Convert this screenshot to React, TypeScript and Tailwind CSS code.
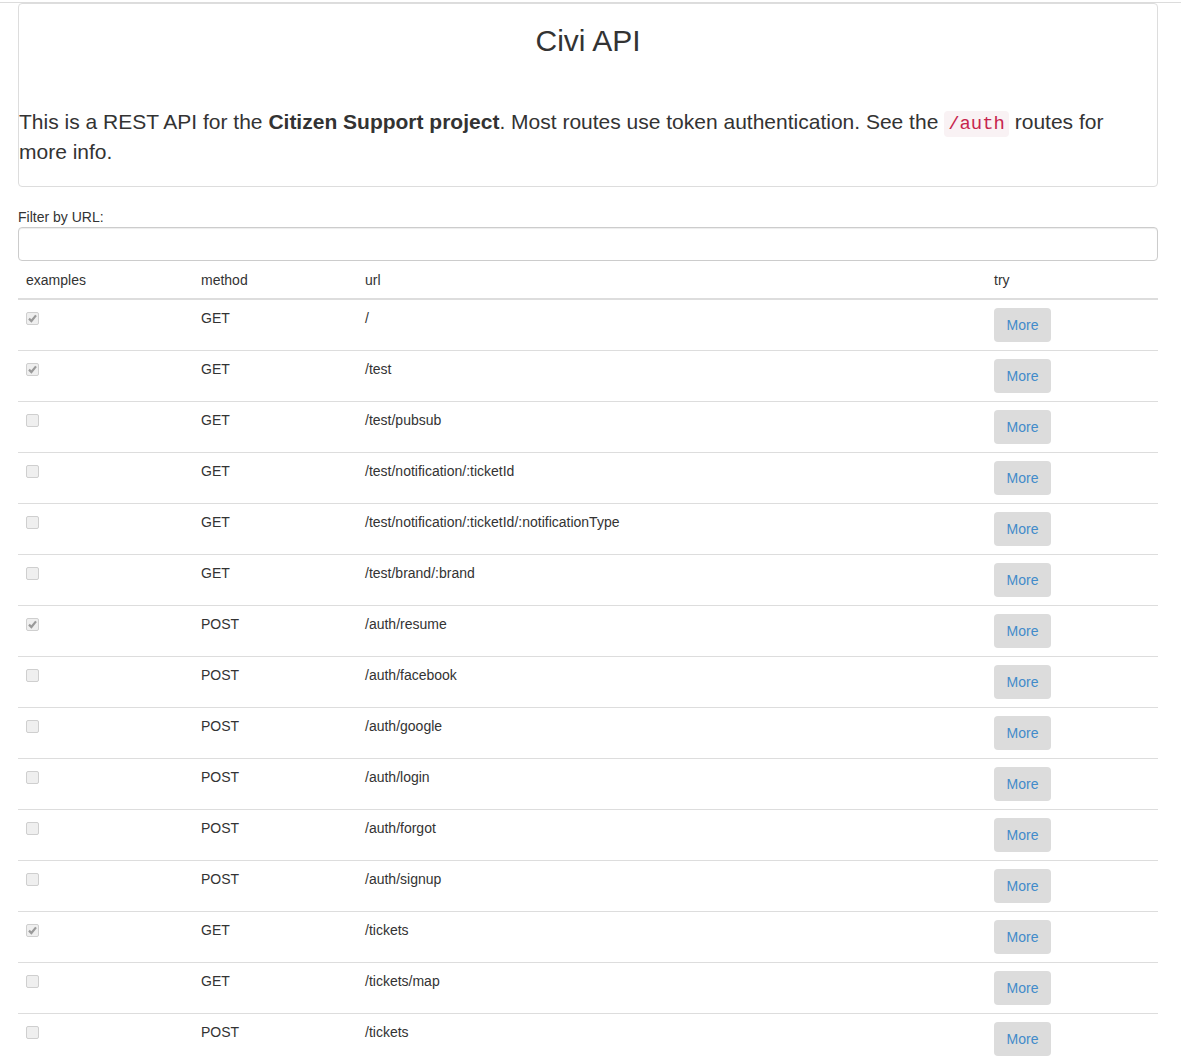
import React from 'react';

const routes = [
  { checked: true, method: 'GET', url: '/' },
  { checked: true, method: 'GET', url: '/test' },
  { checked: false, method: 'GET', url: '/test/pubsub' },
  { checked: false, method: 'GET', url: '/test/notification/:ticketId' },
  { checked: false, method: 'GET', url: '/test/notification/:ticketId/:notificationType' },
  { checked: false, method: 'GET', url: '/test/brand/:brand' },
  { checked: true, method: 'POST', url: '/auth/resume' },
  { checked: false, method: 'POST', url: '/auth/facebook' },
  { checked: false, method: 'POST', url: '/auth/google' },
  { checked: false, method: 'POST', url: '/auth/login' },
  { checked: false, method: 'POST', url: '/auth/forgot' },
  { checked: false, method: 'POST', url: '/auth/signup' },
  { checked: true, method: 'GET', url: '/tickets' },
  { checked: false, method: 'GET', url: '/tickets/map' },
  { checked: false, method: 'POST', url: '/tickets' },
];

// greyed-out checkbox, like a disabled native one
function Check({ checked }: { checked: boolean }) {
  return (
    <span className="mt-[4px] flex h-[13px] w-[13px] items-center justify-center rounded-[2px] border border-[#cfcfcf] bg-[#efefef]">
      {checked && (
        <svg width="9" height="9" viewBox="0 0 9 9">
          <path d="M1 4.6 L3.4 7 L8 1.4" fill="none" stroke="#9a9a9a" strokeWidth="2.2" />
        </svg>
      )}
    </span>
  );
}

export default function App() {
  return (
    <div className="min-h-screen bg-white pt-[2px] text-[14px] leading-[20px] text-[#333] font-['Liberation_Sans',Arial,sans-serif]">
      <div className="h-px w-full bg-[#dcdcdc]" />

      <div className="ml-[18px] w-[1140px]">
        {/* intro panel */}
        <div className="rounded-[4px] border border-[#ddd] pb-[19px]">
          <h2 className="mt-[20px] text-center text-[30px] leading-[33px] font-normal">Civi API</h2>
          <p className="mt-[50px] text-[21px] leading-[30px]">
            This is a REST API for the <b className="font-bold">Citizen Support project</b>. Most routes use token authentication. See the{' '}
            <code className="rounded-[4px] bg-[#f9f2f4] px-[4px] py-[2px] text-[18.9px] leading-none text-[#c7254e] font-['Liberation_Mono',monospace]">/auth</code>{' '}
            routes for more info.
          </p>
        </div>

        {/* filter */}
        <label className="mt-[20px] block">Filter by URL:</label>
        <input
          type="text"
          className="block h-[34px] w-full rounded-[4px] border border-[#ccc] px-3 shadow-[inset_0_1px_1px_rgba(0,0,0,0.075)] outline-none"
        />

        <table className="mt-px w-full border-collapse text-left">
          <thead>
            <tr className="border-b-2 border-[#ddd]">
              <th className="w-[175px] p-[8px] font-normal">examples</th>
              <th className="w-[164px] p-[8px] font-normal">method</th>
              <th className="w-[629px] p-[8px] font-normal">url</th>
              <th className="p-[8px] font-normal">try</th>
            </tr>
          </thead>
          <tbody>
            {routes.map((r, i) => (
              <tr key={i} className="border-t border-[#ddd] align-top">
                <td className="p-[8px]">
                  <Check checked={r.checked} />
                </td>
                <td className="p-[8px]">{r.method}</td>
                <td className="p-[8px]">{r.url}</td>
                <td className="p-[8px]">
                  <button className="h-[34px] w-[57px] rounded-[4px] bg-[#dcdcdc] text-[14px] text-[#428bca]">More</button>
                </td>
              </tr>
            ))}
          </tbody>
        </table>
      </div>
    </div>
  );
}
